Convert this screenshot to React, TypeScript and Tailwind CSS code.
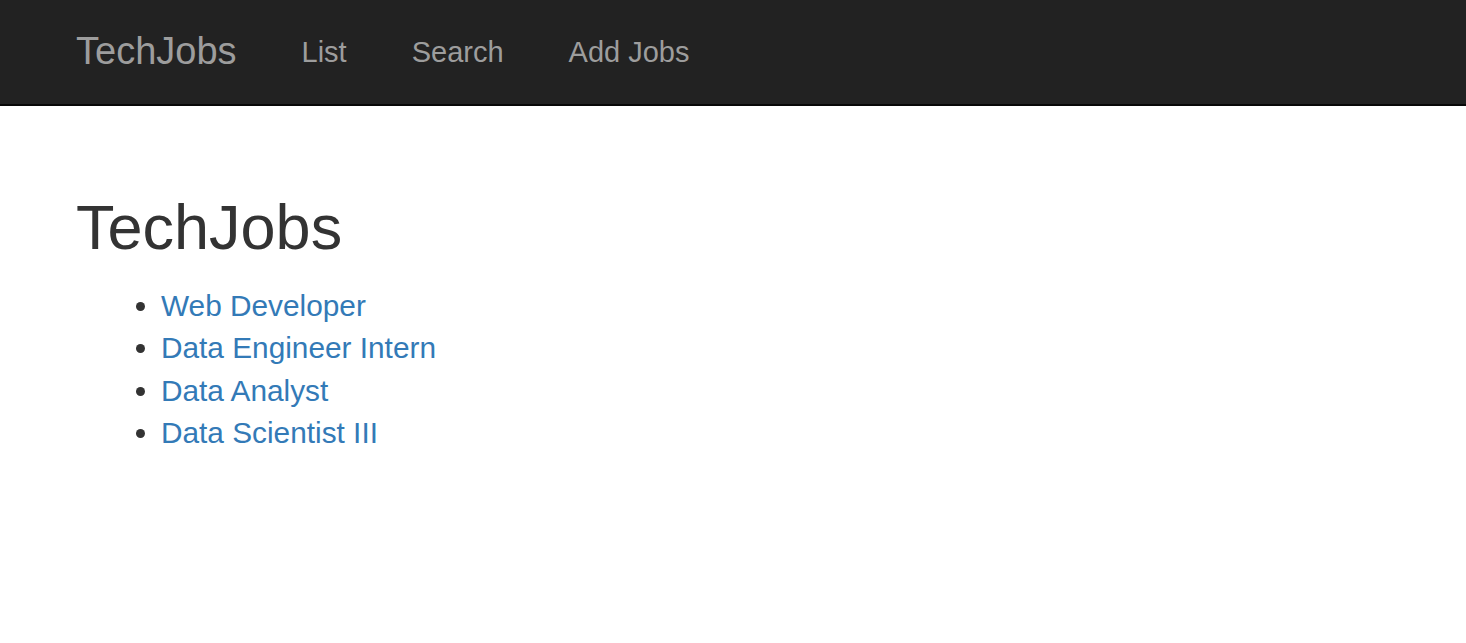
import React from 'react';

const jobs = ["Web Developer", "Data Engineer Intern", "Data Analyst", "Data Scientist III"];

export default function App() {
  return (
    <div className="min-h-screen bg-white font-['Liberation_Sans',Arial,sans-serif] text-[#333]">
      {/* Navbar */}
      <nav className="h-[106px] bg-[#222] border-b-2 border-[#080808]">
        <div className="h-[104px] flex items-center px-[76px]">
          <a href="#" className="text-[38px] leading-[38px] text-[#9d9d9d] pb-[3px]">TechJobs</a>
          <div className="flex items-center gap-[65px] ml-[65px]">
            <a href="#" className="text-[29px] leading-[29px] text-[#9d9d9d]">List</a>
            <a href="#" className="text-[29px] leading-[29px] text-[#9d9d9d]">Search</a>
            <a href="#" className="text-[29px] leading-[29px] text-[#9d9d9d]">Add Jobs</a>
          </div>
        </div>
      </nav>

      {/* Content */}
      <main className="px-[76px]">
        <h1 className="mt-[88px] text-[63px] leading-[67px] text-[#333]">TechJobs</h1>
        <ul className="mt-[24px] list-disc pl-[85px] text-[29.8px] leading-[42.3px]">
          {jobs.map((job) => (
            <li key={job}>
              <a href="#" className="text-[#337ab7]">{job}</a>
            </li>
          ))}
        </ul>
      </main>
    </div>
  );
}
